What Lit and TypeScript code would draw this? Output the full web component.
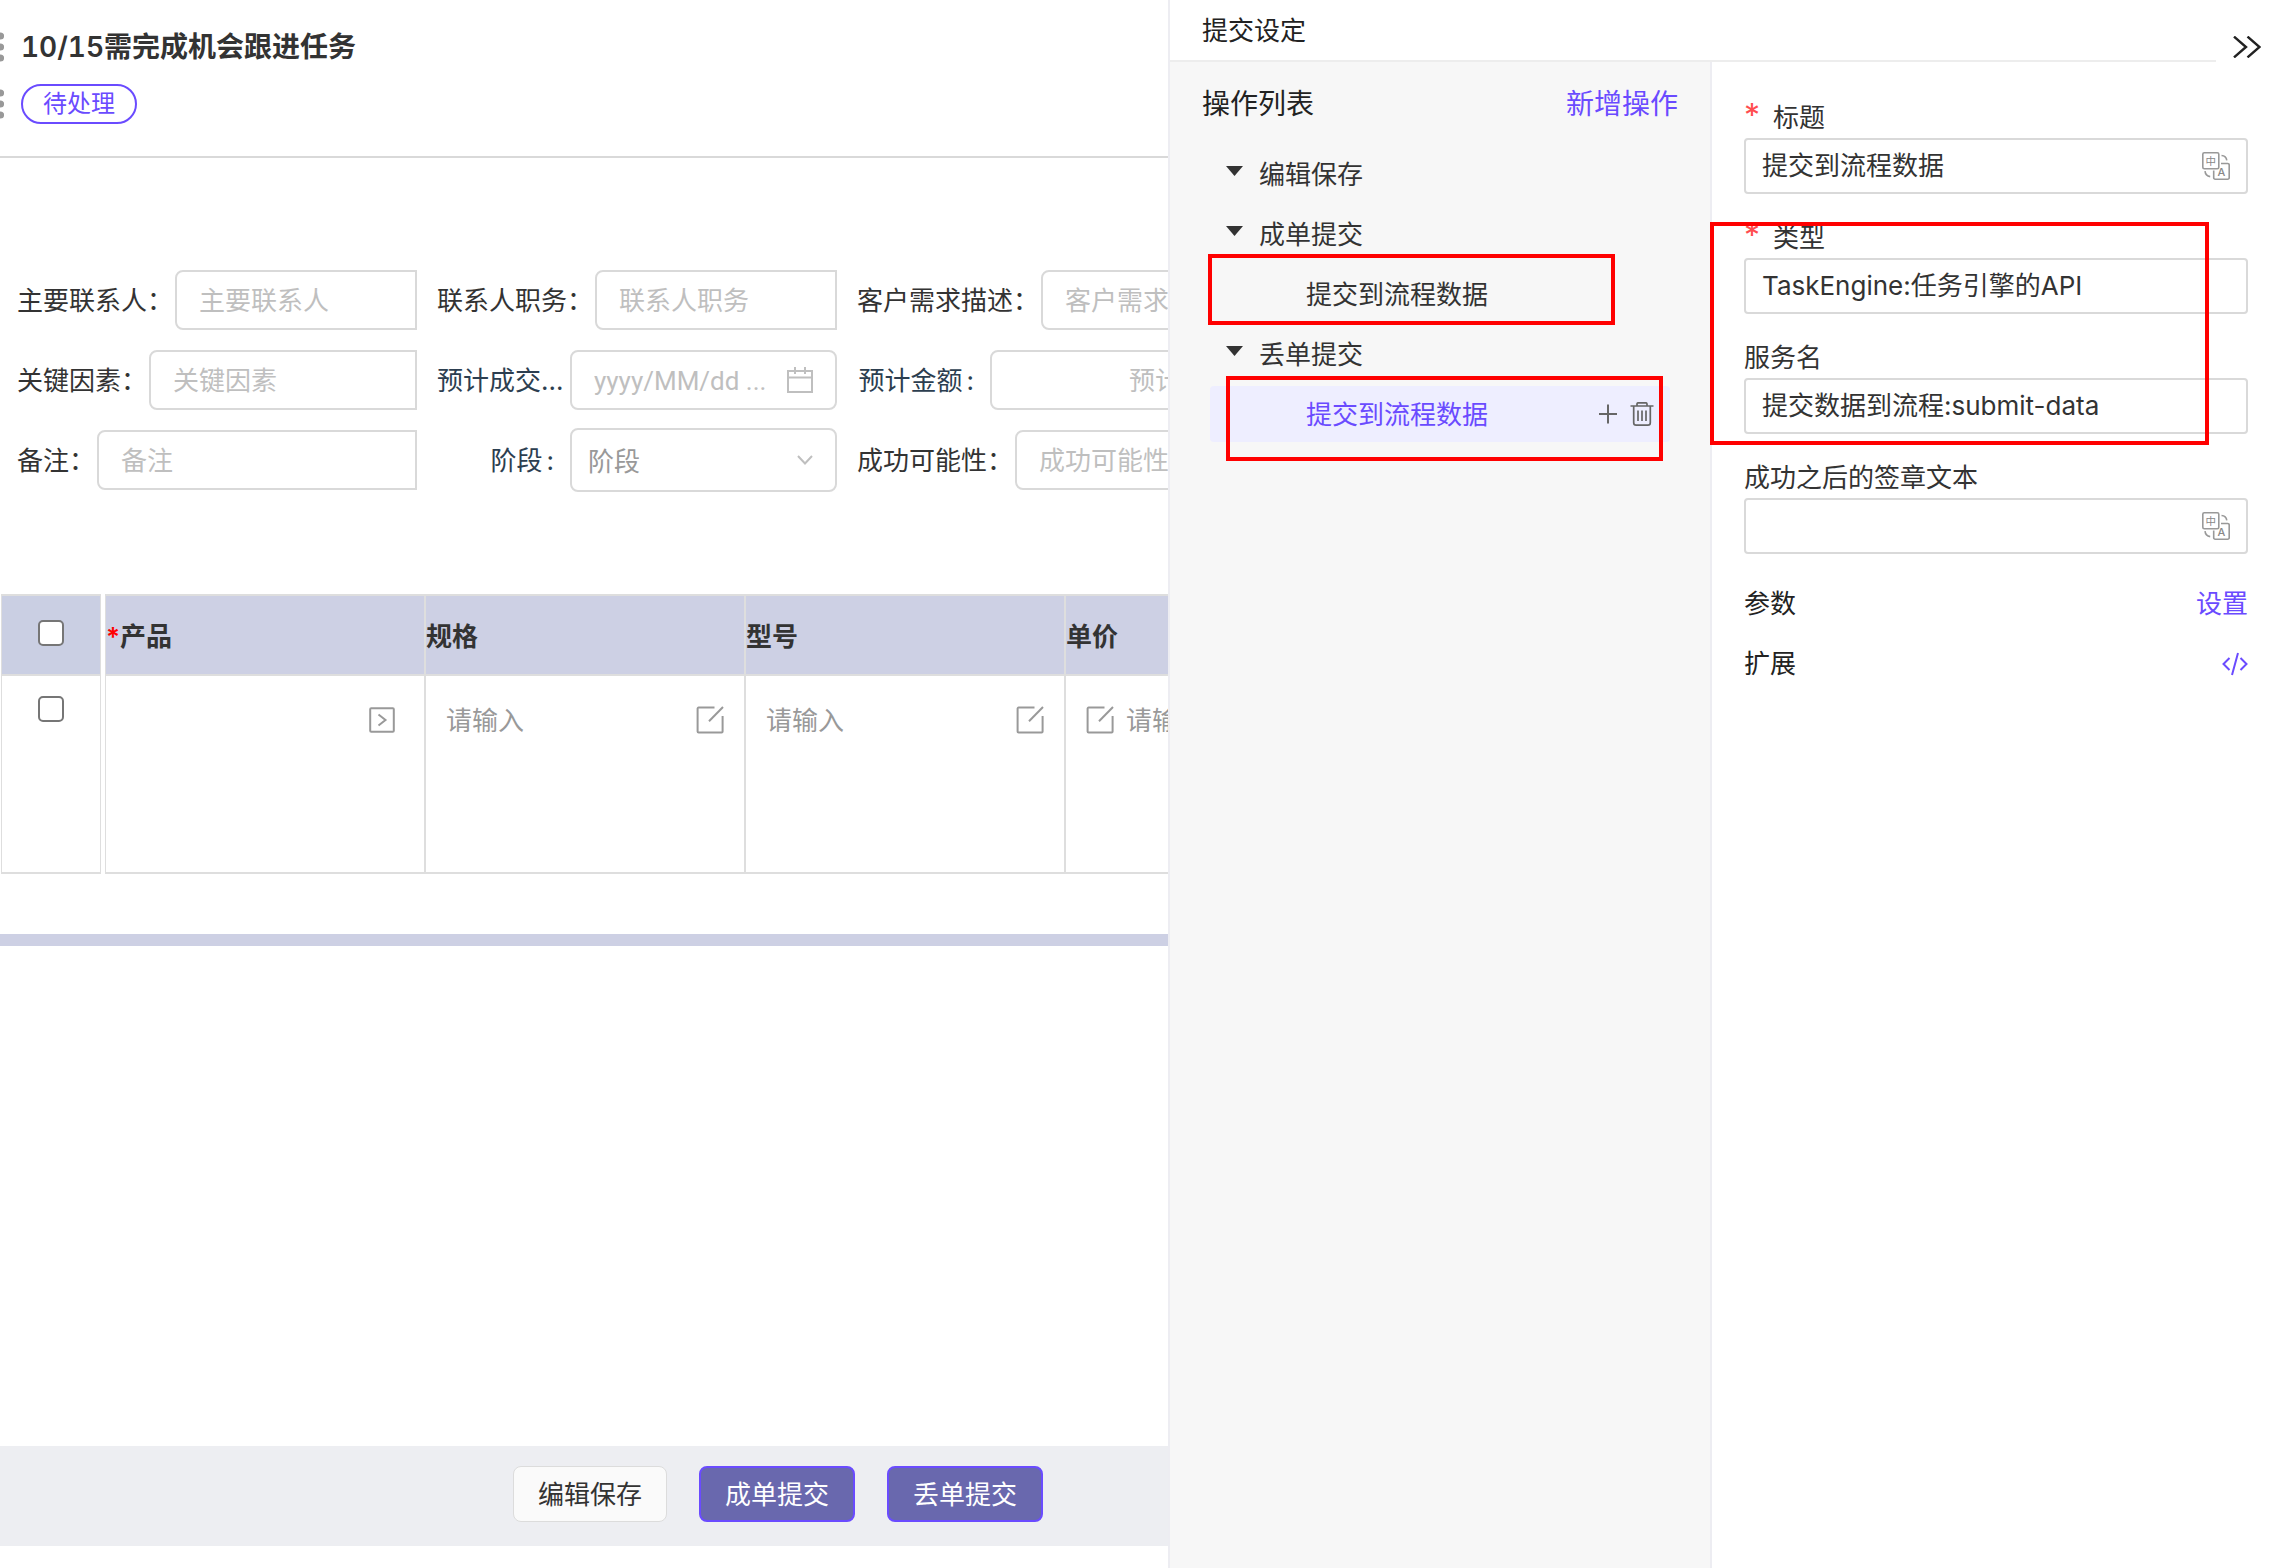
import { LitElement, html, css, svg, nothing } from "lit";
import { customElement, property } from "lit/decorators.js";

const dots = html`<svg class="dots" width="4" height="30" viewBox="0 0 4 30" aria-hidden="true">
  <circle cx="0.5" cy="4" r="3.6" /><circle cx="0.5" cy="15" r="3.6" /><circle cx="0.5" cy="26" r="3.6" />
</svg>`;

const editIcon = html`<svg width="28" height="28" viewBox="0 0 28 28" fill="none" stroke="#999" stroke-width="2" aria-hidden="true">
  <path d="M18.5 1.6H2.6a1 1 0 0 0-1 1v23a1 1 0 0 0 1 1h23a1 1 0 0 0 1-1V10" />
  <path d="M27 1L13 15.2" />
</svg>`;

const pickIcon = html`<svg width="26" height="26" viewBox="0 0 26 26" fill="none" stroke="#999" stroke-width="2" aria-hidden="true">
  <rect x="1.2" y="1.2" width="23.6" height="23.6" rx="1" /><path d="M9.5 7.5L16.5 13L9.5 18.5" />
</svg>`;

const calendarIcon = html`<svg width="26" height="26" viewBox="0 0 26 26" fill="none" stroke="#bfbfbf" stroke-width="2" aria-hidden="true">
  <rect x="1" y="4" width="24" height="21" /><path d="M1 10.5H25M8 0V7M18 0V7" />
</svg>`;

const chevronIcon = html`<svg class="chevron" width="16" height="10" viewBox="0 0 16 10" fill="none" stroke="#bfbfbf" stroke-width="2" aria-hidden="true">
  <path d="M1 1L8 8.5L15 1" />
</svg>`;

const translateIcon = html`<svg width="28" height="28" viewBox="0 0 28 28" fill="none" stroke="#999" stroke-width="1.6" aria-hidden="true">
  <rect x="0.8" y="0.8" width="16" height="16" rx="1.5" />
  <path d="M19 11.5H25.7a1.5 1.5 0 0 1 1.500 1.500V25.700a1.500 1.500 0 0 1-1.500 1.500H13.200a1.500 1.500 0 0 1-1.500-1.500V18.500" />
  <path d="M19.5 3.5C22.6 3.7 24.4 5.4 24.8 8.4M3 19.2C3.3 22.3 5 24.2 8.2 24.6" />
  ${svg`<text x="8.8" y="12.6" font-size="10.5" text-anchor="middle" fill="#888" stroke="none">中</text>
  <text x="19.5" y="24" font-size="11" font-weight="500" text-anchor="middle" fill="#888" stroke="none">A</text>`}
</svg>`;

@customElement("form-cell")
class FormCell extends LitElement {
  @property() label = "";
  @property() hint = "";
  /** "text" | "date" | "amount" | "select" */
  @property() kind = "text";

  static styles = css`
    :host { display: block; min-width: 0; }
    * { box-sizing: border-box; }
    .cell { display: flex; align-items: center; gap: 2px; height: 60px; font-size: 26px; line-height: 40px; color: #333; }
    .label { flex: none; padding-top: 2px; white-space: nowrap; }
    .fixed { gap: 0; }
    .fixed .label { width: 133px; padding-right: 16px; text-align: right; color: #2c3e50; }
    .fixed .wide { padding-right: 0; text-align: left; }
    .colon { margin-left: 4px; }
    .box {
      flex: 1; min-width: 0; display: flex; align-items: center; height: 60px; padding: 0 22px;
      border: 2px solid #d9d9d9; border-radius: 8px 0 0 8px; background: #fff;
    }
    .fixed .box { border-radius: 8px; }
    .fixed .tall { height: 64px; padding: 0 22px 0 16px; }
    input, select {
      flex: 1; min-width: 0; width: 100%; height: 40px; padding: 2px 0 0; margin: 0; border: 0; outline: 0;
      background: none; appearance: none; font: inherit; color: #333; text-overflow: ellipsis;
    }
    select { color: #999; }
    input::placeholder { color: #bfbfbf; opacity: 1; }
    .amount { text-align: right; }
    .date { font-family: Roboto, "Noto Sans CJK SC", sans-serif; }
    svg { flex: none; }
  `;

  render() {
    const fixed = this.kind !== "text";
    const wide = this.label.endsWith("...");
    return html`<div class="cell ${fixed ? "fixed" : ""}">
      <label class="label ${wide ? "wide" : ""}" for="field">${this.label}${fixed && !wide ? html`<span class="colon">:</span>` : nothing}</label>
      <div class="box ${this.kind === "select" ? "tall" : ""}">
        ${this.kind === "select"
          ? html`<select id="field"><option>${this.hint}</option></select>${chevronIcon}`
          : html`<input id="field" class=${this.kind} type="text" placeholder=${this.hint} />`}
        ${this.kind === "date" ? calendarIcon : nothing}
      </div>
    </div>`;
  }
}

@customElement("task-form")
class TaskForm extends LitElement {
  static styles = css`
    :host { flex: 1; min-width: 0; display: flex; flex-direction: column; overflow: hidden; background: #fff; }
    * { box-sizing: border-box; }
    .head { padding: 27px 0 32px; border-bottom: 2px solid #d9d9d9; }
    .line { display: flex; align-items: center; gap: 17px; }
    .line + .line { margin-top: 17px; }
    .dots { flex: none; fill: #999; }
    h1 { margin: 0; font-size: 28px; line-height: 40px; font-weight: 600; font-variant-numeric: tabular-nums; color: #333; white-space: nowrap; }
    .tag { padding: 0 20px; height: 40px; border: 2px solid #6a4bff; border-radius: 20px; font-size: 24px; line-height: 36px; color: #6a4bff; }
    .fields { display: grid; grid-template-columns: repeat(3, 400px); grid-auto-rows: 60px; gap: 20px; padding: 112px 0 104px 17px; }
    .grid { display: flex; gap: 4px; padding-left: 1px; }
    table { flex: none; table-layout: fixed; border-collapse: separate; border-spacing: 0; border-left: 1px solid #dedede; font-size: 26px; }
    .picks { width: 100px; }
    .items { width: 1281px; }
    th, td { padding: 0; border-right: 2px solid #dedede; border-bottom: 2px solid #dedede; }
    .picks th, .picks td { border-right-width: 1px; text-align: center; }
    th { height: 82px; padding: 4px 0 0; border-top: 2px solid #dedede; background: #cdd0e4; color: #333; text-align: left; font-weight: 600; line-height: 40px; }
    .picks th { background: #cacfe3; padding: 0 0 4px; }
    td { height: 198px; padding: 24px 20px 0; vertical-align: top; }
    .picks td { padding: 20px 0 0; }
    .star { color: #f00; }
    .tick { display: block; width: 26px; height: 26px; margin: 0 auto; border: 2px solid #767676; border-radius: 5px; background: #fff; appearance: none; }
    .entry { display: flex; align-items: center; gap: 12px; height: 40px; }
    .entry svg { flex: none; }
    .pick { justify-content: flex-end; padding-right: 9px; }
    .entry input { flex: 1; min-width: 0; height: 40px; padding: 0; border: 0; outline: 0; background: none; font: inherit; color: #333; }
    .entry input::placeholder { color: #999; opacity: 1; }
    .icon { display: flex; padding: 0; border: 0; background: none; }
    .band { height: 12px; margin-top: 60px; background: #cdd0e4; }
    .actions { display: flex; justify-content: flex-end; gap: 32px; margin: auto 0 22px; padding: 20px 125px 24px 0; background: #edeef2; }
    .btn { height: 56px; padding: 2px 24px 0; border: 2px solid #6a4bff; border-radius: 8px; background: #6968ae; color: #fff; font: inherit; font-size: 26px; line-height: 40px; white-space: nowrap; }
    .plain { border: 1px solid #dcdcdc; background: #fafafa; color: #333; }
  `;

  private fields = [
    ["主要联系人：", "主要联系人", "text"],
    ["联系人职务：", "联系人职务", "text"],
    ["客户需求描述：", "客户需求描述", "text"],
    ["关键因素：", "关键因素", "text"],
    ["预计成交...", "yyyy/MM/dd ...", "date"],
    ["预计金额", "预计金额", "amount"],
    ["备注：", "备注", "text"],
    ["阶段", "阶段", "select"],
    ["成功可能性：", "成功可能性", "text"],
  ];

  render() {
    const edit = html`<button class="icon" aria-label="编辑">${editIcon}</button>`;
    return html`
      <header class="head">
        <div class="line">${dots}<h1>10/15需完成机会跟进任务</h1></div>
        <div class="line">${dots}<span class="tag">待处理</span></div>
      </header>
      <div class="fields">
        ${this.fields.map(([label, hint, kind]) => html`<form-cell .label=${label} .hint=${hint} .kind=${kind}></form-cell>`)}
      </div>
      <div class="grid">
        <table class="picks">
          <tr><th><input class="tick" type="checkbox" aria-label="全选" /></th></tr>
          <tr><td><input class="tick" type="checkbox" aria-label="选择" /></td></tr>
        </table>
        <table class="items">
          <tr><th><span class="star">*</span>产品</th><th>规格</th><th>型号</th><th>单价</th></tr>
          <tr>
            <td><div class="entry pick"><button class="icon" aria-label="产品">${pickIcon}</button></div></td>
            <td><div class="entry"><input placeholder="请输入" aria-label="规格" />${edit}</div></td>
            <td><div class="entry"><input placeholder="请输入" aria-label="型号" />${edit}</div></td>
            <td><div class="entry">${edit}<input placeholder="请输入" aria-label="单价" /></div></td>
          </tr>
        </table>
      </div>
      <div class="band"></div>
      <footer class="actions">
        <button class="btn plain">编辑保存</button>
        <button class="btn">成单提交</button>
        <button class="btn">丢单提交</button>
      </footer>
    `;
  }
}

@customElement("submit-panel")
class SubmitPanel extends LitElement {
  static styles = css`
    :host { box-sizing: border-box; position: relative; flex: none; width: 1112px; display: flex; flex-direction: column; border-left: 2px solid #ededf2; background: #fff; color: #333; font-size: 26px; line-height: 40px; }
    * { box-sizing: border-box; }
    button { padding: 0; border: 0; background: none; font: inherit; color: inherit; }
    h2, h3, ul { margin: 0; padding: 0; font: inherit; list-style: none; }
    .title { height: 62px; margin-right: 64px; padding: 11px 32px 0; border-bottom: 2px solid #ededed; color: #222; }
    .fold { position: absolute; top: 36px; right: 19px; display: flex; }
    .body { flex: 1; display: flex; }
    .side { width: 542px; border-right: 2px solid #ededf2; background: #f7f7f7; }
    .bar { display: flex; align-items: center; justify-content: space-between; height: 82px; padding: 2px 32px 0; font-size: 28px; color: #222; }
    .bar button, .link { color: #6a4bff; }
    .tree { padding: 0 40px; }
    .tree li { padding: 2px 0; }
    .row { display: flex; align-items: center; gap: 16px; height: 56px; padding: 0 16px; border-radius: 4px; }
    .name { padding-top: 2px; }
    .caret { width: 17px; height: 10px; margin-bottom: 6px; }
    .child { gap: 12px; padding-left: 96px; }
    .active { background: #eeeeff; color: #6a4bff; }
    .active .name { flex: 1; text-align: left; }
    .tool { display: flex; }
    .form { flex: 1; min-width: 0; padding: 36px 32px; }
    .field { margin-bottom: 24px; }
    .field:last-of-type { margin-bottom: 20px; }
    .field label { display: block; height: 40px; line-height: 40px; }
    .star { display: inline-block; width: 29px; font-size: 32px; line-height: 1; color: #ff4d4f; }
    .box { display: flex; align-items: center; height: 56px; padding: 0 16px; border: 2px solid #d9d9d9; border-radius: 4px; }
    .box input { flex: 1; min-width: 0; height: 40px; padding: 0; border: 0; outline: 0; background: none; font: inherit; color: #333; }
    .pairs { margin-top: -4px; }
    .pair { display: flex; align-items: center; justify-content: space-between; height: 60px; color: #222; }
    .mark { position: absolute; border: 4px solid #f00; pointer-events: none; }
    .mark-a { left: 38px; top: 254px; width: 407px; height: 71px; }
    .mark-b { left: 56px; top: 376px; width: 437px; height: 85px; }
    .mark-c { left: 540px; top: 222px; width: 499px; height: 223px; }
  `;

  private branch(name: string) {
    return html`<li><div class="row">
      <svg class="caret" viewBox="0 0 17 10" aria-hidden="true"><path d="M0 0H17L8.5 10Z" fill="#333" /></svg>
      <button class="name">${name}</button>
    </div></li>`;
  }

  private field(id: string, label: string, value: string, required: boolean, translate: boolean) {
    return html`<div class="field">
      <label for=${id}>${required ? html`<span class="star">*</span>` : nothing}${label}</label>
      <div class="box">
        <input id=${id} type="text" .value=${value} />
        ${translate ? html`<button class="tool" aria-label="翻译">${translateIcon}</button>` : nothing}
      </div>
    </div>`;
  }

  render() {
    return html`
      <h2 class="title">提交设定</h2>
      <button class="fold" aria-label="收起">
        <svg width="28" height="22" viewBox="0 0 28 22" fill="none" stroke="#222" stroke-width="2.4" aria-hidden="true">
          <path d="M1 0.6L13 11L1 21.4M14.5 0.6L26.5 11L14.5 21.4" />
        </svg>
      </button>
      <div class="body">
        <section class="side">
          <div class="bar"><h3>操作列表</h3><button>新增操作</button></div>
          <ul class="tree">
            ${this.branch("编辑保存")}
            ${this.branch("成单提交")}
            <li><div class="row child"><button class="name">提交到流程数据</button></div></li>
            ${this.branch("丢单提交")}
            <li><div class="row child active">
              <button class="name">提交到流程数据</button>
              <button class="tool" aria-label="添加">
                <svg width="20" height="20" viewBox="0 0 20 20" stroke="#666" stroke-width="2" aria-hidden="true"><path d="M1 10H19M10 0.5V19.5" /></svg>
              </button>
              <button class="tool" aria-label="删除">
                <svg width="24" height="24" viewBox="0 0 24 24" fill="none" stroke="#666" stroke-width="1.7" aria-hidden="true">
                  <path d="M0.5 4H23.5M7 4V2a1.2 1.2 0 0 1 1.2-1.2h7.6A1.2 1.2 0 0 1 17 2V4M3.7 4V20.7a2.4 2.4 0 0 0 2.4 2.4H17.9a2.4 2.4 0 0 0 2.4-2.4V4M8 8.5V19M12 8.5V19M16 8.5V19" />
                </svg>
              </button>
            </div></li>
          </ul>
        </section>
        <section class="form">
          ${this.field("title", "标题", "提交到流程数据", true, true)}
          ${this.field("type", "类型", "TaskEngine:任务引擎的API", true, false)}
          ${this.field("service", "服务名", "提交数据到流程:submit-data", false, false)}
          ${this.field("stamp", "成功之后的签章文本", "", false, true)}
          <div class="pairs">
            <div class="pair"><span>参数</span><button class="link">设置</button></div>
            <div class="pair"><span>扩展</span>
              <button class="tool" aria-label="扩展代码">
                <svg width="26" height="24" viewBox="0 0 26 24" fill="none" stroke="#6a4bff" stroke-width="2" aria-hidden="true">
                  <path d="M7.5 6L1.5 12L7.5 18M18.5 6L24.5 12L18.5 18M16 1L10 23" />
                </svg>
              </button>
            </div>
          </div>
        </section>
      </div>
      <div class="mark mark-a"></div>
      <div class="mark mark-b"></div>
      <div class="mark mark-c"></div>
    `;
  }
}

@customElement("app-root")
class AppRoot extends LitElement {
  static styles = css`
    :host { display: flex; min-height: 100vh; overflow: hidden; background: #fff; font-family: Inter, "Noto Sans CJK SC", sans-serif; }
  `;

  render() {
    return html`<task-form></task-form><submit-panel></submit-panel>`;
  }
}
